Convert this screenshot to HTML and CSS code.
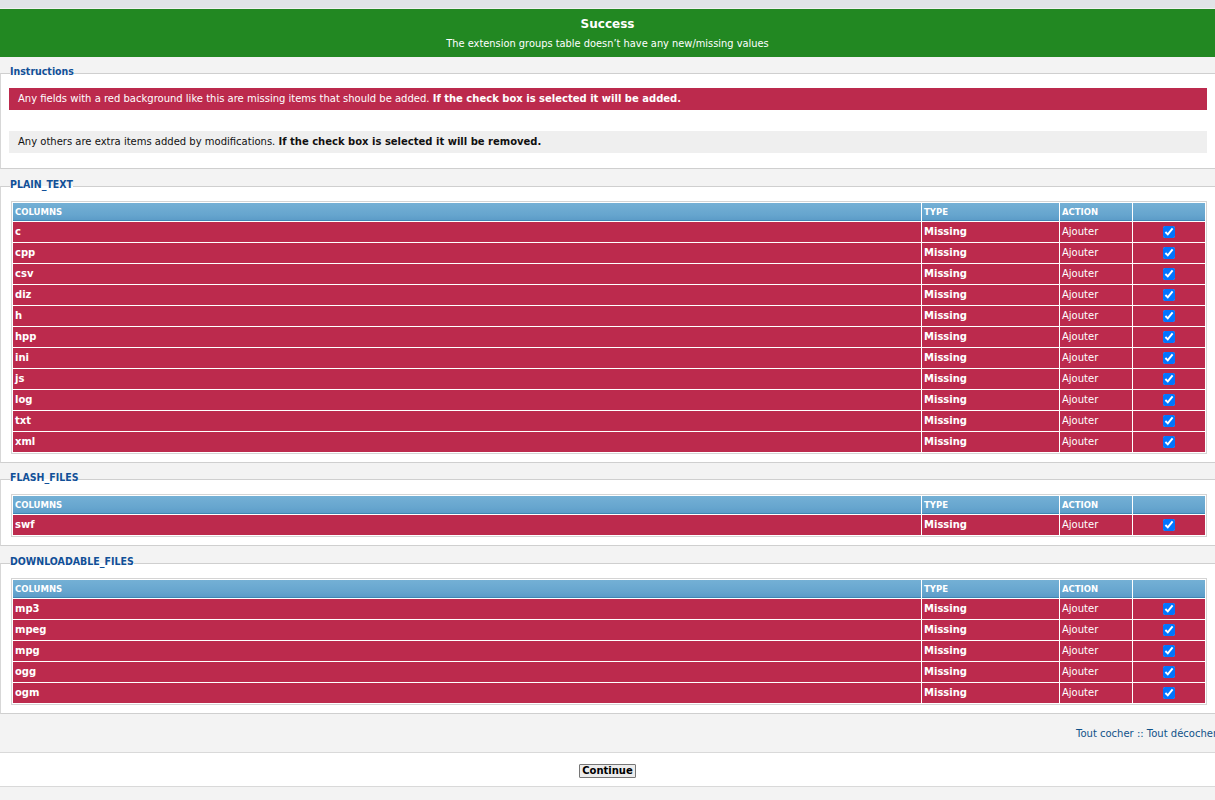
FILE: index.html
```html
<!DOCTYPE html>
<html>
<head>
<meta charset="utf-8">
<title>Extension groups</title>
<link rel="stylesheet" href="styles.css">
</head>
<body>
<div class="page">
  <div class="topbar"></div>
  <div class="successbox">
    <h3>Success</h3>
    <p>The extension groups table doesn’t have any new/missing values</p>
  </div>
  <div class="main">
    <fieldset class="panel">
      <legend>Instructions</legend>
      <p class="note note-missing">Any fields with a red background like this are missing items that should be added. <strong>If the check box is selected it will be added.</strong></p>
      <p class="note note-extra">Any others are extra items added by modifications. <strong>If the check box is selected it will be removed.</strong></p>
    </fieldset>

    <fieldset class="panel">
      <legend>PLAIN_TEXT</legend>
      <table class="grid">
        <colgroup><col class="c1"><col class="c2"><col class="c3"><col class="c4"></colgroup>
        <thead><tr><th>Columns</th><th>Type</th><th>Action</th><th></th></tr></thead>
        <tbody>
          <tr><td class="name">c</td><td class="type">Missing</td><td>Ajouter</td><td class="chk"><input type="checkbox" checked></td></tr>
          <tr><td class="name">cpp</td><td class="type">Missing</td><td>Ajouter</td><td class="chk"><input type="checkbox" checked></td></tr>
          <tr><td class="name">csv</td><td class="type">Missing</td><td>Ajouter</td><td class="chk"><input type="checkbox" checked></td></tr>
          <tr><td class="name">diz</td><td class="type">Missing</td><td>Ajouter</td><td class="chk"><input type="checkbox" checked></td></tr>
          <tr><td class="name">h</td><td class="type">Missing</td><td>Ajouter</td><td class="chk"><input type="checkbox" checked></td></tr>
          <tr><td class="name">hpp</td><td class="type">Missing</td><td>Ajouter</td><td class="chk"><input type="checkbox" checked></td></tr>
          <tr><td class="name">ini</td><td class="type">Missing</td><td>Ajouter</td><td class="chk"><input type="checkbox" checked></td></tr>
          <tr><td class="name">js</td><td class="type">Missing</td><td>Ajouter</td><td class="chk"><input type="checkbox" checked></td></tr>
          <tr><td class="name">log</td><td class="type">Missing</td><td>Ajouter</td><td class="chk"><input type="checkbox" checked></td></tr>
          <tr><td class="name">txt</td><td class="type">Missing</td><td>Ajouter</td><td class="chk"><input type="checkbox" checked></td></tr>
          <tr><td class="name">xml</td><td class="type">Missing</td><td>Ajouter</td><td class="chk"><input type="checkbox" checked></td></tr>
        </tbody>
      </table>
    </fieldset>

    <fieldset class="panel">
      <legend>FLASH_FILES</legend>
      <table class="grid">
        <colgroup><col class="c1"><col class="c2"><col class="c3"><col class="c4"></colgroup>
        <thead><tr><th>Columns</th><th>Type</th><th>Action</th><th></th></tr></thead>
        <tbody>
          <tr><td class="name">swf</td><td class="type">Missing</td><td>Ajouter</td><td class="chk"><input type="checkbox" checked></td></tr>
        </tbody>
      </table>
    </fieldset>

    <fieldset class="panel">
      <legend>DOWNLOADABLE_FILES</legend>
      <table class="grid">
        <colgroup><col class="c1"><col class="c2"><col class="c3"><col class="c4"></colgroup>
        <thead><tr><th>Columns</th><th>Type</th><th>Action</th><th></th></tr></thead>
        <tbody>
          <tr><td class="name">mp3</td><td class="type">Missing</td><td>Ajouter</td><td class="chk"><input type="checkbox" checked></td></tr>
          <tr><td class="name">mpeg</td><td class="type">Missing</td><td>Ajouter</td><td class="chk"><input type="checkbox" checked></td></tr>
          <tr><td class="name">mpg</td><td class="type">Missing</td><td>Ajouter</td><td class="chk"><input type="checkbox" checked></td></tr>
          <tr><td class="name">ogg</td><td class="type">Missing</td><td>Ajouter</td><td class="chk"><input type="checkbox" checked></td></tr>
          <tr><td class="name">ogm</td><td class="type">Missing</td><td>Ajouter</td><td class="chk"><input type="checkbox" checked></td></tr>
        </tbody>
      </table>
    </fieldset>

    <div class="marks"><a href="#">Tout cocher</a> :: <a href="#">Tout décocher</a></div>

    <div class="submit">
      <button type="button" class="btn">Continue</button>
    </div>
  </div>
</div>
</body>
</html>
```

FILE: styles.css
```css
html, body {
  margin: 0;
  padding: 0;
  overflow: hidden;
  background: #f3f3f3;
}

body {
  font-family: "DejaVu Sans", Verdana, sans-serif;
  font-size: 10px;
  color: #111;
}

.page {
  width: 1224px;
}

.topbar {
  width: 1215px;
  height: 8px;
  background: #e1e4e7;
  border-bottom: 1px solid #f1f1f1;
}

.successbox {
  width: 1215px;
  height: 48px;
  background: #228822;
  color: #fff;
  text-align: center;
  box-sizing: border-box;
  padding-top: 7px;
}

.successbox h3 {
  margin: 0;
  font-size: 12px;
  line-height: 16px;
  font-weight: bold;
}

.successbox p {
  margin: 5px 0 0;
  font-size: 9.85px;
  line-height: 13px;
}

.main {
  padding-top: 7px;
}

.panel {
  width: 1198px;
  margin: 0 0 7.5px;
  padding: 5px 8px 8px;
  border: 1px solid #cfcfcf;
  border-left-color: #d7d7d7;
  background: #fff;
}

.panel legend {
  padding: 0 0 5px;
  margin-left: 1px;
  font-size: 10.5px;
  font-stretch: condensed;
  line-height: 14px;
  font-weight: bold;
  color: #115098;
}

.note {
  margin: 0;
  height: 22px;
  line-height: 22px;
  padding: 0 9px;
  font-size: 10px;
}

.note-missing {
  background: #bc2a4d;
  color: #fff;
  margin-bottom: 21px;
}

.note-extra {
  background: #efefef;
  color: #111;
  margin-bottom: 7px;
}

.grid {
  width: 1196px;
  margin-left: 2px;
  table-layout: fixed;
  border-collapse: separate;
  border-spacing: 1px;
  border: 1px solid #d4d4d4;
  background: #fff;
}

.c1 { width: 908px; }
.c2 { width: 137px; }
.c3 { width: 72px; }
.c4 { width: 72px; }

.grid th {
  height: 18px;
  padding: 1px 2px 0;
  box-sizing: border-box;
  text-align: left;
  font-size: 8.5px;
  font-weight: bold;
  text-transform: uppercase;
  color: #fff;
  background: linear-gradient(#74b0d5, #66a5ce 70%, #5c9cc8);
  border-bottom: 1px solid #3f86b3;
}

.grid td {
  height: 20px;
  padding: 0 2px;
  box-sizing: border-box;
  background: #bc2a4d;
  color: #fff;
  font-size: 10px;
  line-height: 20px;
}

.grid td.name,
.grid td.type {
  font-weight: bold;
}

.grid td.chk {
  text-align: center;
  padding: 0;
}

.grid td.chk input {
  margin: 0;
  width: 12px;
  height: 12px;
  vertical-align: middle;
}

.marks {
  height: 38px;
  line-height: 40px;
  margin-top: -7.5px;
  text-align: right;
  padding-right: 7px;
  font-size: 10px;
  color: #105289;
}

.marks a {
  color: #105289;
  text-decoration: none;
}

.submit {
  width: 1215px;
  height: 33px;
  background: #fff;
  border-top: 1px solid #d9d9d9;
  border-bottom: 1px solid #d9d9d9;
  text-align: center;
}

.btn {
  margin-top: 11px;
  padding: 0 2px;
  height: 14px;
  font-family: "DejaVu Sans", Verdana, sans-serif;
  font-size: 10px;
  font-weight: bold;
  line-height: 12px;
  color: #000;
  background: #ececec;
  border: 1px solid #767676;
  border-radius: 1px;
  vertical-align: top;
}
```
